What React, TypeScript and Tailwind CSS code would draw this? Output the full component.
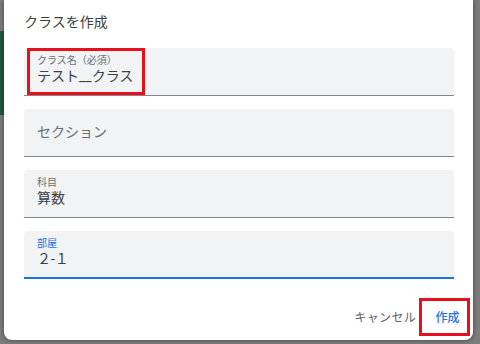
const jp = { fontFamily: 'Roboto, "Noto Sans CJK JP", sans-serif' }

function Field({
  label,
  value,
  placeholder,
  focused,
  marked,
}: {
  label?: string
  value?: string
  placeholder?: string
  focused?: boolean
  marked?: boolean
}) {
  return (
    <div
      className={
        'relative h-[48px] rounded-t-[4px] bg-[#f1f3f4] pl-[13px] ' +
        (focused ? 'border-b-2 border-[#1a73e8]' : 'border-b border-[#80868b]')
      }
    >
      {placeholder ? (
        <div className="flex h-full items-center text-[14px] text-[#6b6f73]">{placeholder}</div>
      ) : (
        <div className="pt-[6px]">
          <div className={'text-[10px] leading-[13px] ' + (focused ? 'text-[#1a73e8]' : 'text-[#6b6f73]')}>
            {label}
          </div>
          <div className="text-[14px] leading-[19px] text-[#3c4043]">{value}</div>
        </div>
      )}
      {marked && (
        <div className="absolute left-[3px] top-0 h-[47px] w-[118px] border-[3px] border-[#e8101c]" />
      )}
    </div>
  )
}

export default function App() {
  return (
    <div className="flex h-[344px] w-[480px] overflow-hidden bg-[#7c7c7c]" style={jp}>
      {/* dimmed page behind */}
      <div className="w-[4px] shrink-0">
        <div className="h-[31px]" />
        <div className="h-[84px] bg-[#1f5a3e]" />
      </div>

      {/* dialog */}
      <div className="h-[340px] w-[469px] shrink-0 rounded-b-[8px] bg-white shadow-[0_0_5px_rgba(0,0,0,0.45)]">
        <div className="pl-[20px] pr-[19px]">
          <h2 className="pt-[12px] text-[14px] leading-[20px] text-[#3c4043]">クラスを作成</h2>
          <div className="mt-[16px] flex flex-col gap-[13px]">
            <Field label="クラス名（必須）" value="テスト__クラス" marked />
            <Field placeholder="セクション" />
            <Field label="科目" value="算数" />
            <Field label="部屋" value="２-１" focused />
          </div>
        </div>

        {/* actions */}
        <div className="mt-[19px] flex items-center justify-end pr-[3px]">
          <button className="mr-[3px] pt-[2px] text-[12px] tracking-[0.3px] text-[#5f6368]">キャンセル</button>
          <button className="relative h-[38px] w-[51px] pl-[6px] pt-[2px] text-[12px] font-medium text-[#1a73e8]">
            作成
            <span className="absolute inset-0 border-[3px] border-[#e8101c]" />
          </button>
        </div>
      </div>
    </div>
  )
}
